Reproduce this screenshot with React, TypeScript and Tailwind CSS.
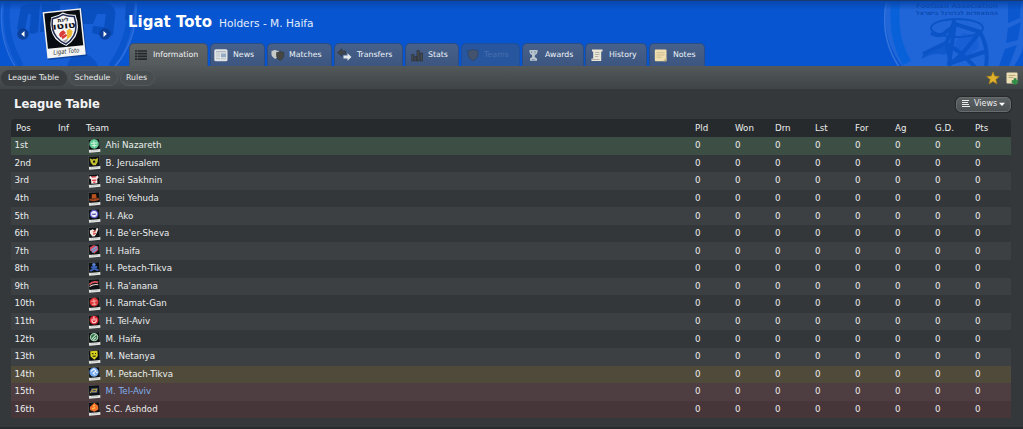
import React from "react";

const TEXT = "font-['DejaVu_Sans',sans-serif]";

type Tab = { label: string; ml: string; w: string; pl: string; tl: string; kind: string };

const tabs: Tab[] = [
  { label: "Information", ml: "ml-[129px]", w: "w-[79px]", pl: "pl-[5px]", tl: "w-[18px]", kind: "list" },
  { label: "News", ml: "ml-[2px]", w: "w-[55px]", pl: "pl-[3px]", tl: "w-[19px]", kind: "news" },
  { label: "Matches", ml: "ml-[2px]", w: "w-[65px]", pl: "pl-[3px]", tl: "w-[18px]", kind: "matches" },
  { label: "Transfers", ml: "ml-[2px]", w: "w-[69px]", pl: "pl-[2px]", tl: "w-[20px]", kind: "transfers" },
  { label: "Stats", ml: "ml-[2px]", w: "w-[54px]", pl: "pl-[5px]", tl: "w-[17px]", kind: "stats" },
  { label: "Teams", ml: "ml-[2px]", w: "w-[59px]", pl: "pl-[5px]", tl: "w-[17px]", kind: "teams" },
  { label: "Awards", ml: "ml-[2px]", w: "w-[62px]", pl: "pl-[4px]", tl: "w-[18px]", kind: "awards" },
  { label: "History", ml: "ml-[1px]", w: "w-[62px]", pl: "pl-[5px]", tl: "w-[18px]", kind: "history" },
  { label: "Notes", ml: "ml-[2px]", w: "w-[56px]", pl: "pl-[4px]", tl: "w-[19px]", kind: "notes" },
];

type Row = { pos: string; team: string; tint: string; color: string };

const rows: Row[] = [
  { pos: "1st", team: "Ahi Nazareth", tint: "bg-[#3d4f45]", color: "text-[#eceeee]" },
  { pos: "2nd", team: "B. Jerusalem", tint: "bg-[#33373a]", color: "text-[#eceeee]" },
  { pos: "3rd", team: "Bnei Sakhnin", tint: "bg-[#3c4043]", color: "text-[#eceeee]" },
  { pos: "4th", team: "Bnei Yehuda", tint: "bg-[#33373a]", color: "text-[#eceeee]" },
  { pos: "5th", team: "H. Ako", tint: "bg-[#3c4043]", color: "text-[#eceeee]" },
  { pos: "6th", team: "H. Be'er-Sheva", tint: "bg-[#33373a]", color: "text-[#eceeee]" },
  { pos: "7th", team: "H. Haifa", tint: "bg-[#3c4043]", color: "text-[#eceeee]" },
  { pos: "8th", team: "H. Petach-Tikva", tint: "bg-[#33373a]", color: "text-[#eceeee]" },
  { pos: "9th", team: "H. Ra'anana", tint: "bg-[#3c4043]", color: "text-[#eceeee]" },
  { pos: "10th", team: "H. Ramat-Gan", tint: "bg-[#33373a]", color: "text-[#eceeee]" },
  { pos: "11th", team: "H. Tel-Aviv", tint: "bg-[#3c4043]", color: "text-[#eceeee]" },
  { pos: "12th", team: "M. Haifa", tint: "bg-[#33373a]", color: "text-[#eceeee]" },
  { pos: "13th", team: "M. Netanya", tint: "bg-[#3c4043]", color: "text-[#eceeee]" },
  { pos: "14th", team: "M. Petach-Tikva", tint: "bg-[#504a3a]", color: "text-[#eceeee]" },
  { pos: "15th", team: "M. Tel-Aviv", tint: "bg-[#4e3d41]", color: "text-[#7fb0ea]" },
  { pos: "16th", team: "S.C. Ashdod", tint: "bg-[#463539]", color: "text-[#eceeee]" },
];

const columns = ["Pld", "Won", "Drn", "Lst", "For", "Ag", "G.D.", "Pts"];

/* Small crest artwork, one drawing per row, in a 12 x 13 box. */
const crests: React.ReactNode[] = [
  <g><circle cx="6" cy="4.8" r="4.6" fill="#5fc993" /><path d="M6 1.5v6.6M3 4h6M3.5 6.3h5" stroke="#d4f5e2" strokeWidth=".9" /></g>,
  <path d="M2 2l2.500 1.200L6 2.600l1.500.6L10 2l-.6 4L7.400 9H4.600L2.600 6z M5 4.500v2h2v-2z" fill="#c4bf2e" fillRule="evenodd" />,
  <g><path d="M2 1.500l2 1h4l2-1 .5 2.500-1.500 1v4.300H3V5L1.500 4z" fill="#f7e6e6" /><path d="M4 2.800h4M4 6h4M5 8h2" stroke="#e0343e" strokeWidth="1.200" /></g>,
  <g><path d="M4 2h4l.5 4.500H3.500z" fill="#b9501f" /><path d="M1.500 6.800q4.500 2.500 9 0" stroke="#a84620" strokeWidth="2" fill="none" /></g>,
  <g><circle cx="6" cy="4.900" r="4.200" fill="#5d5bc8" /><circle cx="6" cy="4.900" r="2.900" fill="#eeeefc" /><path d="M4.200 5h3.600" stroke="#5350a0" strokeWidth="1.200" /></g>,
  <g><path d="M2 3l3-1 2 2 2-3 1.500 1-2 4-2 3H4L2 6z" fill="#f5e6e2" /><path d="M5 5l3-1.500M5 7l2.500-1" stroke="#d8473f" strokeWidth="1.300" /></g>,
  <g><path d="M2 3l4-2 4 2v3L6 9.300 2 6z" fill="#d54b5b" /><path d="M3 6l6-3.500M4 8l5-3" stroke="#6fa3e0" strokeWidth="1.500" /></g>,
  <g><circle cx="6" cy="2.600" r="1.700" fill="#5c82cf" /><path d="M3 5h6M6 3.500v4M2 8.500L6 6.500l4 2" stroke="#3c64be" strokeWidth="1.900" fill="none" /></g>,
  <g><path d="M1.500 5Q5 1.500 10 3.500" stroke="#e8545e" strokeWidth="1.700" fill="none" /><path d="M1.500 7Q6 4.500 10 5.800" stroke="#f0d5d7" strokeWidth="1" fill="none" /></g>,
  <g><circle cx="6" cy="4.900" r="4.300" fill="#dc3438" /><path d="M3.500 4h5M6 2v6M4 7h4" stroke="#f8b9b7" strokeWidth=".9" /></g>,
  <g><circle cx="6" cy="5" r="4.300" fill="#dd2630" /><path d="M4.200 3.500q-1 4 1.800 4t1.800-4M6 1.500v4" stroke="#fbe4e4" strokeWidth="1.100" fill="none" /></g>,
  <g><circle cx="6" cy="5" r="3.500" fill="#2a6e43" stroke="#a8ceb3" strokeWidth="1.200" /><path d="M3.800 6.500l4-3.500M5 7.500l3-2" stroke="#d4ead9" strokeWidth="1" /></g>,
  <g><path d="M2.500 1h7v5L6 9.500 2.500 6z" fill="#d9d120" /><path d="M4 3.500h1.500M7 3.500h1M4.500 6h3" stroke="#26250e" strokeWidth="1.100" /></g>,
  <g><circle cx="6" cy="5" r="4.500" fill="#72a8ee" /><path d="M3 4l3-2 2 2-3 2 2 2M8 6l1.500-1" stroke="#eef5fe" strokeWidth="1.100" fill="none" /></g>,
  <g><path d="M1.500 7.800l2-5 3.500 1 3-1-1 5z" fill="#33487c" /><path d="M2 7.500L5 4h3.500l-.8 3M4 6.500h4" fill="none" stroke="#c4a53a" strokeWidth="1" /></g>,
  <g><path d="M6.500.8L10 4v3.500L6 9.500 2 7.500v-3z" fill="#f2702a" /><path d="M4 6.500l3-1M5.500 3l1 1" stroke="#ffc953" strokeWidth="1.400" /></g>,
];

function Crest({ index }: { index: number }) {
  return (
    <svg className="block h-[14px] w-[13px]" viewBox="0 0 12.600 13.600">
      <g transform="rotate(-4 6 6.500)">
        <rect x=".5" y=".3" width="11.200" height="12.600" fill="#5c605f" />
        <rect x=".6" y="10" width="11" height="2.900" fill="#e4e6e3" />
        <rect x="1" y=".7" width="10.200" height="9.300" fill="#0e1113" />
        {crests[index]}
        <path d="M2.500 11.400h7" stroke="#a9aba9" strokeWidth=".7" strokeDasharray="1.500 .6" />
      </g>
    </svg>
  );
}

function TabIcon({ kind }: { kind: string }) {
  const box = "block h-[14px] w-[14px] shrink-0";
  switch (kind) {
    case "list":
      return (
        <svg className={box} viewBox="0 0 14 14">
          <path d="M0 3h2M0 5.700h2M0 8.400h2M0 11.100h2M2.600 3h9.400M2.600 5.700h9.400M2.600 8.400h9.400M2.600 11.100h9.400" stroke="#25282a" strokeWidth="1.700" />
        </svg>
      );
    case "news":
      return (
        <svg className={box} viewBox="0 0 14 14">
          <rect x=".3" y="1.300" width="13.200" height="12" rx="1.500" fill="#e0e4e6" />
          <path d="M2 3.700h10" stroke="#a8b3bc" strokeWidth="1.200" />
          <rect x="7" y="5.500" width="5" height="3.700" fill="#93abc2" />
          <path d="M2 6h4M2 8h4M2 10.500h4M7 10.800h5" stroke="#b5bcc1" strokeWidth=".9" />
        </svg>
      );
    case "matches":
      return (
        <svg className={box} viewBox="0 0 14 14">
          <path d="M.5 3q2-.2 3.500-1.200Q5.500 3 8 3v4q-.6 2.500-4 4Q.8 8.500.5 7z" fill="#c7c9c6" />
          <path d="M5.500 4.500Q8 4.200 9.200 3.200q1.300 1 3.500 1.100v4q-.7 2.500-3.500 4.200-3.200-2-3.700-4z" fill="#464642" stroke="#2f3232" strokeWidth=".5" />
        </svg>
      );
    case "transfers":
      return (
        <svg className="-mr-[1px] block h-[14px] w-[15px] shrink-0" viewBox="0 0 15 14">
          <path d="M.5 4.500l4.300-3.700v2.200H8.500v3H4.800V8.200z" fill="#43474a" stroke="#2d3338" strokeWidth=".6" />
          <path d="M14.500 9L10.500 5.200v2.300H6.500v3h4v2.300z" fill="#e3e7e9" />
        </svg>
      );
    case "stats":
      return (
        <svg className={box} viewBox="0 0 14 14">
          <path d="M.8 6.500h2V13h-2zM3.800 8.500h2V13h-2zM6 2.500h2.200V13H6zM9.200 5h2.200v8H9.200z" fill="#4a4e50" stroke="#2a2f35" strokeWidth=".7" />
        </svg>
      );
    case "teams":
      return (
        <svg className={box} viewBox="0 0 14 14">
          <path d="M1 2.500Q4 2.500 6 1.500q2.500 1 5 1V7q-.5 3.500-5 6-4.500-2.500-5-6z" fill="#43536e" stroke="#2f4468" strokeWidth=".8" />
        </svg>
      );
    case "awards":
      return (
        <svg className={box} viewBox="0 0 14 14">
          <path d="M2.500 2h8v2q-.3 2.500-2.500 3l-.3 2 2.300 1.500v2.300H3v-2.300L5.200 9 5 7Q2.700 6.500 2.500 4z" fill="#b9c5cf" />
          <path d="M4.700 3.200v2M8 3v2.500M5 11.500h2.500" stroke="#7d909f" strokeWidth="1" />
        </svg>
      );
    case "history":
      return (
        <svg className={box} viewBox="0 0 14 14">
          <path d="M1 1.500h10.500v2h-1.300V13H.5v-2.500h1.700V3.500H1z" fill="#e9e6d8" />
          <path d="M4 4.500h4.500M4 6.500h4.500M4 8.500h3.500M1 11.500h7.500" stroke="#a7a698" strokeWidth=".8" />
        </svg>
      );
    default:
      return (
        <svg className={box} viewBox="0 0 14 14">
          <rect x=".8" y="1.500" width="11.700" height="11.700" rx="1" fill="#efdfb0" />
          <path d="M2.500 4.800h8M2.500 7h8M2.500 9.200h5" stroke="#c4b488" strokeWidth=".8" />
          <path d="M9 13.200l3.500-3.500V13.200z" fill="#c5b17b" />
        </svg>
      );
  }
}

function BannerArt() {
  return (
    <svg className="absolute inset-0 h-[66px] w-[1023px]" viewBox="0 0 1023 66">
      <path d="M3 0Q-4 34 17 66H117Q138 40 136 0z" fill="#175fd7" />
      <path d="M8 0Q2 34 21 66M130 0q2 38-19 66" stroke="#0a54cc" strokeWidth="6" fill="none" />
      <path d="M136 0q2 40-21 66M2.500 0q-5 38 12.500 66" stroke="#2c6edc" strokeWidth="1.500" fill="none" />
      <g fill="#0a4fc0">
        <path d="M21 6q10-3 19-2l-2 28q-5 3-9 1l2-19h-3l-3 16q-4 2-8-1z" />
        <path d="M42 4h18v8H47l-2 20h-5z" />
        <path d="M78 3h27q12 2 10 14l-2 18q-9 2-21-2l1-7 11 1 2-13h-9l-4 10H80z" />
        <path d="M126 3h8q1 10-4 17h-5z" />
        <path d="M67 66q3-11 14-13 13 2 17 13z" opacity=".8" />
      </g>
      <path d="M887 0q-7 37 15 66h112q9-14 9-20V0z" fill="#2066d9" />
      <path d="M886.500 0q-7 37 12 66" stroke="#3474dc" strokeWidth="1.500" fill="none" />
      <path d="M896 0q-5 36 11 63" stroke="#0961d9" strokeWidth="9" fill="none" />
      <path d="M1008 0h13l-1 18-12 5zM1008 28l13-6-3 18-12 3zM1005 49l12-4-8 21h-10z" fill="#0b57cf" />
      <path d="M955 43l8-10 14 3 2 12-12 8-10-4z" fill="#185fd5" />
      <path d="M922 56l24-14 4 5-5 8q-12-3-23 4z" fill="#1059cd" />
      <g fill="none" stroke="#0b54c7" strokeWidth="4" strokeLinejoin="round">
        <ellipse cx="957" cy="28" rx="26" ry="9" strokeWidth="2" />
        <path d="M931 33q10 5 16-2 7-3 7-11M955 24l25 8-18 22-16-11zM955 24l-6 40M980 32q9 16 6 34M946 43l-23 11M946 43l5 20 36-12M962 54l14 14M962 54l-14 12" />
      </g>
    </svg>
  );
}

function LeagueBadge() {
  return (
    <svg className="h-[54px] w-[48px]" viewBox="0 0 48 54">
      <g transform="rotate(-6 24 27)">
        <rect x="4.500" y="4" width="39" height="47" fill="#0a2d70" opacity=".5" />
        <rect x="4" y="3" width="38.500" height="46.500" fill="#f3f4f3" />
        <rect x="5.500" y="4.500" width="35.500" height="35.500" fill="#080b10" />
        <path d="M24 5.500q5 3 12.500 3.500Q40 23 34 31q-4 5-10 8-6-3-10-8Q8 22 12 9q7-.5 12-3.500z" fill="#f5f6f5" />
        <path d="M24 7.500q5 2.500 11 3 2.500 12-2.500 19Q29 34.500 24 37q-5-2.500-8.500-7.500-5-7-2.500-19 6-.5 11-3z" fill="none" stroke="#1e2954" strokeWidth="1.500" />
        <path d="M18 27q1-3 5-4l2 3-6 4z" fill="#d93b36" />
        <path d="M20 29l5-2 1 2-5 3z" fill="#d93b36" />
        <path d="M26 24l3-2 3 3-2 5-5 3 1-4z" fill="#edba35" />
        <path d="M21 33.500l6-2-3 4z" fill="#a8a3a0" />
      </g>
      <text x="18" y="14.500" fontSize="5.500" fontWeight="700" fill="#11131b" transform="rotate(-6 24 27)">ליגת</text>
      <text x="12.500" y="21.500" fontSize="8.500" fontWeight="700" fill="#11131b" textLength="23" lengthAdjust="spacingAndGlyphs" transform="rotate(-6 24 27)">טוטו</text>
      <text x="10.500" y="46.500" fontSize="6.200" fontStyle="italic" fill="#252a2d" textLength="26" lengthAdjust="spacingAndGlyphs" transform="rotate(-6 24 27)">Ligat Toto</text>
    </svg>
  );
}

function Arrow({ left }: { left: boolean }) {
  return (
    <svg className="h-[12px] w-[12px]" viewBox="0 0 12 12">
      <circle cx="6" cy="6" r="5.800" fill="#0b3c94" opacity=".85" />
      <path d={left ? "M7.500 3v6L4.200 6z" : "M4.500 3v6L7.800 6z"} fill="#fff" />
    </svg>
  );
}

export default function App() {
  return (
    <div className={`${TEXT} flex h-[429px] w-[1023px] flex-col overflow-hidden bg-[#34383b] text-[#eceeee]`}>
      <header className="relative h-[66px] shrink-0 overflow-hidden bg-[#0755d0]">
        <BannerArt />
        <div className="absolute inset-x-0 top-0 h-[10px] border-t border-[#173a70] bg-linear-to-b from-[#0847ad] to-transparent" />
        <svg className="absolute top-0 left-[910px] h-[18px] w-[96px]" viewBox="0 0 96 18" fill="#0c4bb2" fontWeight="700">
          <text x="6" y="7.800" fontSize="7" textLength="82" lengthAdjust="spacingAndGlyphs">Football Association</text>
          <text x="6" y="15" fontSize="6" textLength="82" lengthAdjust="spacingAndGlyphs">ההתאחדות לכדורגל בישראל</text>
        </svg>
        <div className="absolute top-[28px] left-[17px] flex"><Arrow left /></div>
        <div className="absolute top-[7px] left-[41px] flex"><LeagueBadge /></div>
        <div className="absolute top-[28px] left-[99px] flex"><Arrow left={false} /></div>
        <div className="relative flex h-[43px] items-center pl-[128px] whitespace-nowrap">
          <h1 className="w-[91px] text-[15px] leading-[18px] font-bold text-white">Ligat Toto</h1>
          <span className="pt-[2px] text-[10.6px] leading-[14px] text-[#e4edfb]">Holders - M. Haifa</span>
        </div>
        <nav className="relative flex h-[23px]">
          {tabs.map((t, i) => (
            <div
              key={t.label}
              className={`flex h-[24px] shrink-0 items-center rounded-t-[5px] border border-b-0 text-[7.8px] whitespace-nowrap ${t.ml} ${t.w} ${t.pl} ${
                i === 0
                  ? "border-[#3c5170] bg-linear-to-b from-[#606568] to-[#54595c] text-[#f4f5f6]"
                  : t.kind === "teams"
                    ? "border-[#1e4e9f] bg-[#27569f] text-[#496fad]"
                    : "border-[#2b4d85] bg-linear-to-b from-[#47618a] to-[#3b5580] text-[#f0f4f8]"
              }`}
            >
              <span className={`-mt-[2px] flex shrink-0 ${t.tl}`}><TabIcon kind={t.kind} /></span>
              <span className="-mt-[2px]">{t.label}</span>
            </div>
          ))}
        </nav>
      </header>

      <div className="flex h-[23px] shrink-0 items-center justify-between bg-linear-to-b from-[#53585b] to-[#3f4446] pr-[4px] pl-px text-[7.8px]">
        <div className="flex gap-[2px] whitespace-nowrap">
          <span className="flex h-[16px] w-[66px] items-center justify-center rounded-full bg-[#393d40] pr-[1px]">League Table</span>
          <span className="flex h-[16px] w-[49px] items-center justify-center rounded-full border border-[#53585a] bg-[#484d50] pr-[2px]">Schedule</span>
          <span className="flex h-[16px] w-[35px] items-center justify-center rounded-full border border-[#53585a] bg-[#484d50] pr-[2px]">Rules</span>
        </div>
        <div className="flex items-center gap-[5px]">
          <svg className="h-[14px] w-[14px]" viewBox="0 0 14 14">
            <path d="M7 .8l1.700 4.300 4.700.3-3.600 3 1.200 4.600L7 10.500 3 13l1.200-4.600-3.600-3 4.700-.3z" fill="#e0b22c" stroke="#a67e16" strokeWidth=".6" />
          </svg>
          <svg className="h-[14px] w-[14px]" viewBox="0 0 14 14">
            <rect x="1.500" y="1.500" width="11" height="11" rx="1" fill="#ecdfb5" />
            <path d="M3.500 4.500h7M3.500 6.500h5" stroke="#b2a374" strokeWidth=".9" />
            <path d="M9 7.500h2.200v2h2v2.200h-2v2H9v-2H7V9.500h2z" fill="#2d9345" stroke="#246d37" strokeWidth=".5" />
          </svg>
        </div>
      </div>

      <main className="flex flex-1 flex-col border-b-2 border-[#282b2d] pr-[12px] pl-[11px]">
        <div className="flex h-[30px] shrink-0 items-center justify-between pl-[3px]">
          <h2 className="text-[11.6px] leading-[16px] font-bold text-[#f2f3f3]">League Table</h2>
          <button className="flex h-[15px] w-[55px] items-center rounded-[5px] border border-[#676c6f] bg-linear-to-b from-[#5b6063] to-[#4b5053] pl-[5px] text-[8px] shadow-[0_0_1px_1px_#26292b]">
            <svg className="mr-[4px] h-[8px] w-[8px] shrink-0" viewBox="0 0 8 8" shapeRendering="crispEdges">
              <path d="M0 0h7v1H0zM0 2h6v1H0zM0 4h7v1H0zM0 6h8v1H0z" fill="#e9ebeb" />
            </svg>
            <span>Views</span>
            <svg className="mt-[1px] ml-[2px] h-[5px] w-[6px] shrink-0" viewBox="0 0 6 5"><path d="M0 .8h6L3 4z" fill="#fff" /></svg>
          </button>
        </div>

        <div className="flex h-[18px] shrink-0 items-center rounded-t-[4px] bg-[#272a2d] pt-[2px] text-[8.7px] whitespace-nowrap">
          <span className="w-[47px] shrink-0 pl-[5px]">Pos</span>
          <span className="w-[28px] shrink-0">Inf</span>
          <span className="w-[609px] shrink-0">Team</span>
          {columns.map((c) => (
            <span key={c} className="w-[40px] shrink-0">{c}</span>
          ))}
        </div>
        {rows.map((r, i) => (
          <div key={r.pos} className={`flex h-[17.58px] shrink-0 items-center text-[8.7px] whitespace-nowrap ${r.tint}`}>
            <span className="w-[77px] shrink-0 pl-[3.5px]">{r.pos}</span>
            <span className="w-[17px] shrink-0"><Crest index={i} /></span>
            <span className={`w-[590px] shrink-0 pl-[0.5px] ${r.color}`}>{r.team}</span>
            {columns.map((c) => (
              <span key={c} className="w-[40px] shrink-0">0</span>
            ))}
          </div>
        ))}
      </main>
    </div>
  );
}
